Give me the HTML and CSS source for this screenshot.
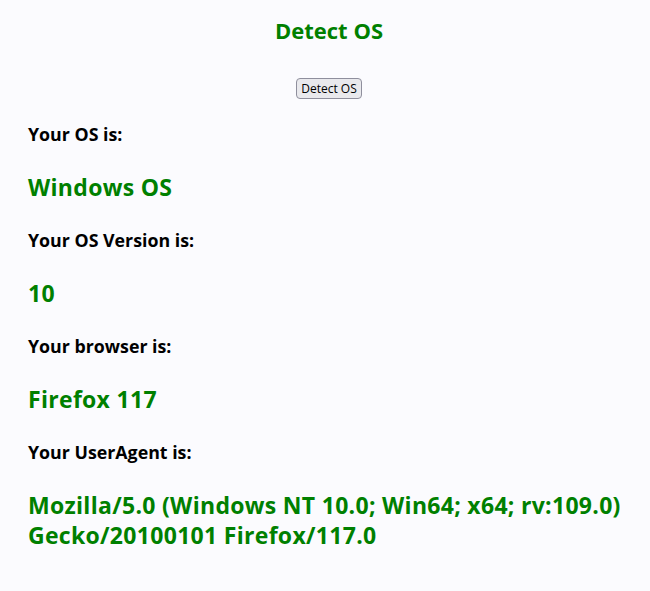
FILE: index.html
```html
<!DOCTYPE html>
<html>
<head>
<meta charset="utf-8">
<title>Detect OS</title>
<link rel="stylesheet" href="styles.css">
</head>
<body>
<h2 class="title">Detect OS</h2>
<div class="actions"><button class="btn" type="button">Detect OS</button></div>
<div class="info">
  <p class="label">Your OS is:</p>
  <p class="value">Windows OS</p>
  <p class="label">Your OS Version is:</p>
  <p class="value">10</p>
  <p class="label">Your browser is:</p>
  <p class="value">Firefox 117</p>
  <p class="label">Your UserAgent is:</p>
  <p class="value">Mozilla/5.0 (Windows NT 10.0; Win64; x64; rv:109.0) Gecko/20100101 Firefox/117.0</p>
</div>
</body>
</html>
```
FILE: styles.css
```css
html{background:#fbfbfe;}
body{
  margin:8px 0 8px 8px;
  font-family:"Open Sans","Noto Sans",sans-serif;
  color:#000;
}
.title{
  margin:7px 0 0;
  font-size:22px;
  line-height:30px;
  font-weight:700;
  color:#008000;
  text-align:center;
}
.actions{
  display:flex;
  justify-content:center;
  margin-top:33px;
}
.btn{
  height:21px;
  padding:0 4px;
  font-family:"Open Sans","Noto Sans",sans-serif;
  font-size:12px;
  line-height:19px;
  color:#000;
  background:#e9e9ed;
  border:1px solid #8f8f9d;
  border-radius:4px;
}
.info{
  padding:0 8px 0 20px;
  margin-top:23px;
}
.label{
  margin:0 0 26px;
  font-size:17.8px;
  line-height:24px;
  font-weight:700;
}
.value{
  margin:0 0 26px;
  font-size:23px;
  letter-spacing:0.3px;
  line-height:30px;
  font-weight:700;
  color:#008000;
}
```
